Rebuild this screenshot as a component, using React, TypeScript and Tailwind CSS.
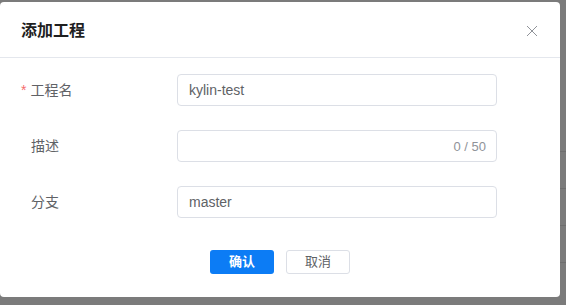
import React, { useState } from "react";

const fontStack = { fontFamily: '"Liberation Sans", "Noto Sans CJK SC", sans-serif' };

const App: React.FC = () => {
  const [name, setName] = useState("kylin-test");
  const [desc, setDesc] = useState("");
  const [branch, setBranch] = useState("master");

  return (
    <div className="relative h-[305px] w-[566px] overflow-hidden bg-[#7b7b7b]" style={fontStack}>
      {/* backdrop table lines */}
      <div className="absolute right-0 top-[115px] flex w-[8px] flex-col">
        <div className="h-[37px] border-b border-[#6e6e6e]"></div>
        <div className="h-[37px] border-b border-[#6e6e6e]"></div>
        <div className="h-[37px] border-b border-[#6e6e6e]"></div>
        <div className="h-[37px] border-b border-[#6e6e6e]"></div>
      </div>

      <div className="absolute left-0 top-[2px] h-[295px] w-[560px] rounded-[4px] bg-white">
        <div className="flex h-[56px] items-center justify-between border-b border-[#e4e7ed] pl-[21px] pr-[22px] pt-[3px]">
          <h3 className="text-[16px] font-bold text-[#1f1f1f]">添加工程</h3>
          <button type="button" className="text-[#909399]">
            <svg width="12" height="12" viewBox="0 0 12 12" fill="none" stroke="currentColor" strokeWidth="1">
              <path d="M1 1L11 11M11 1L1 11" />
            </svg>
          </button>
        </div>

        <form className="flex flex-col gap-[24px] pt-[16px]" onSubmit={(e) => e.preventDefault()}>
          <div className="flex items-center">
            <label className="flex w-[177px] items-center pl-[21px] text-[14px] text-[#606266]">
              <span className="mr-[4px] text-[#f56c6c]">*</span>工程名
            </label>
            <input
              type="text"
              value={name}
              onChange={(e) => setName(e.target.value)}
              className="h-[32px] w-[320px] rounded-[4px] border border-[#dcdfe6] px-[11px] text-[14px] text-[#606266] outline-none"
            />
          </div>

          <div className="flex items-center">
            <label className="w-[177px] pl-[31px] text-[14px] text-[#606266]">描述</label>
            <div className="relative">
              <input
                type="text"
                value={desc}
                maxLength={50}
                onChange={(e) => setDesc(e.target.value)}
                className="h-[32px] w-[320px] rounded-[4px] border border-[#dcdfe6] pl-[11px] pr-[60px] text-[14px] text-[#606266] outline-none"
              />
              <span className="absolute right-[11px] top-[7px] text-[13px] text-[#909399]">{desc.length} / 50</span>
            </div>
          </div>

          <div className="flex items-center">
            <label className="w-[177px] pl-[31px] text-[14px] text-[#606266]">分支</label>
            <input
              type="text"
              value={branch}
              onChange={(e) => setBranch(e.target.value)}
              className="h-[32px] w-[320px] rounded-[4px] border border-[#dcdfe6] px-[11px] text-[14px] text-[#606266] outline-none"
            />
          </div>

          <div className="mt-[8px] flex justify-center gap-[12px]">
            <button type="submit" className="h-[24px] w-[64px] rounded-[3px] bg-[#0c7cf5] text-[13px] font-bold text-white">
              确认
            </button>
            <button type="button" className="h-[24px] w-[64px] rounded-[3px] border border-[#dcdfe6] bg-white text-[13px] text-[#606266]">
              取消
            </button>
          </div>
        </form>
      </div>
    </div>
  );
};

export default App;
